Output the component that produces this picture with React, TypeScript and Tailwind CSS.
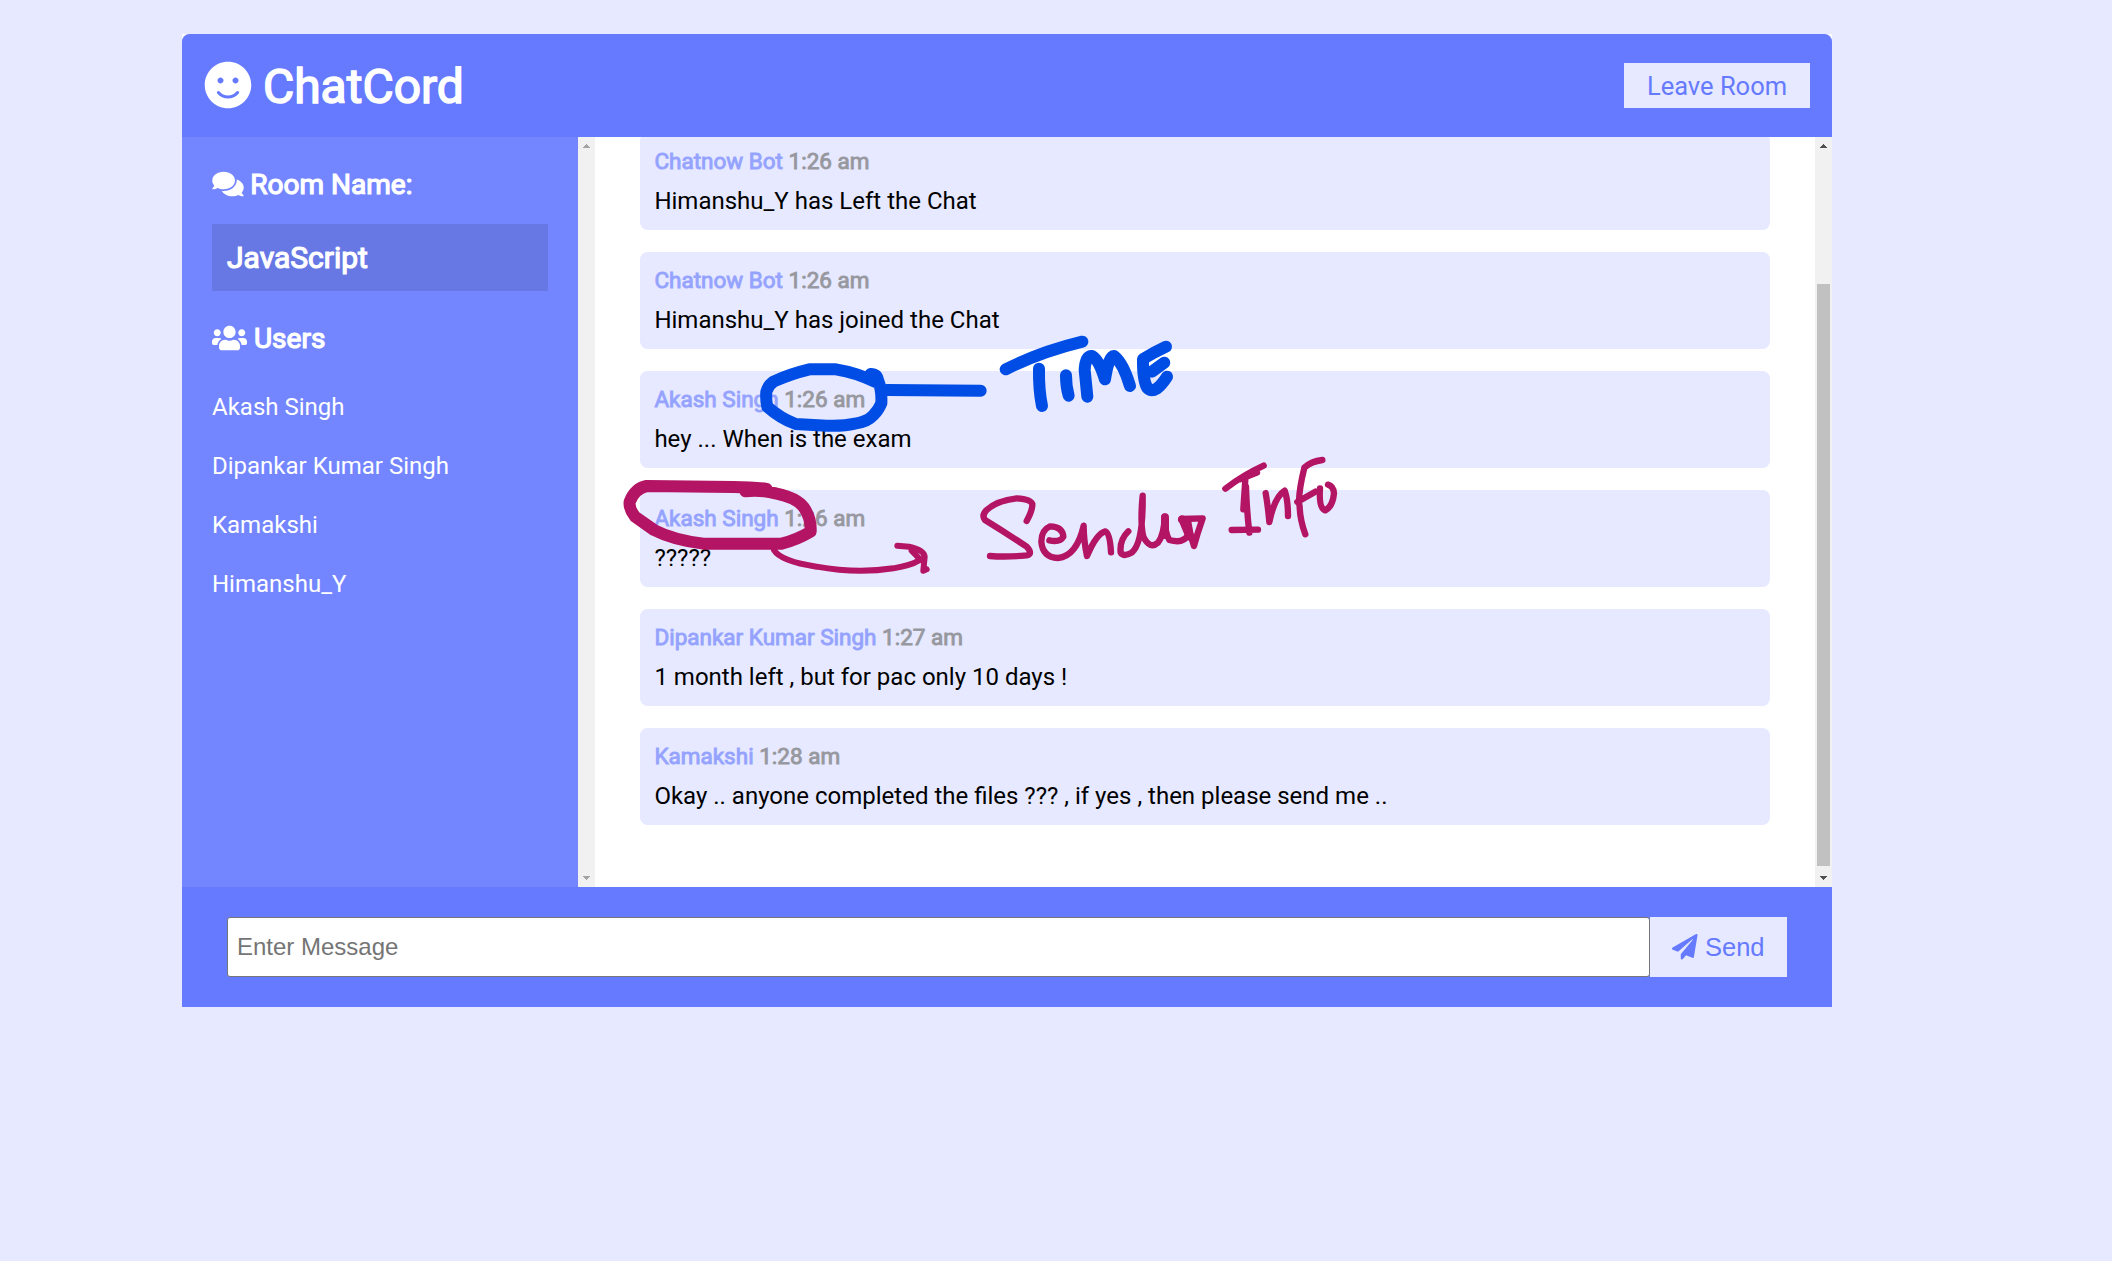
import { FaComments, FaPaperPlane, FaSmile, FaUsers } from "react-icons/fa";

const users = ["Akash Singh", "Dipankar Kumar Singh", "Kamakshi", "Himanshu_Y"];

const messages = [
  { sender: "Chatnow Bot", time: "1:26 am", text: "Himanshu_Y has Left the Chat" },
  { sender: "Chatnow Bot", time: "1:26 am", text: "Himanshu_Y has joined the Chat" },
  { sender: "Akash Singh", time: "1:26 am", text: "hey ... When is the exam" },
  { sender: "Akash Singh", time: "1:26 am", text: "?????" },
  { sender: "Dipankar Kumar Singh", time: "1:27 am", text: "1 month left , but for pac only 10 days !" },
  { sender: "Kamakshi", time: "1:28 am", text: "Okay .. anyone completed the files ??? , if yes , then please send me .." },
];

function Arrow({ down, className }: { down?: boolean; className: string }) {
  return (
    <svg className={className} width="7" height="4" viewBox="0 0 7 4" shapeRendering="crispEdges">
      {down ? (
        <path d="M0 0h7v1H0zM1 1h5v1H1zM2 2h3v1H2zM3 3h1v1H3z" fill="currentColor" />
      ) : (
        <path d="M3 0h1v1H3zM2 1h3v1H2zM1 2h5v1H1zM0 3h7v1H0z" fill="currentColor" />
      )}
    </svg>
  );
}

function Scrollbar({ active }: { active?: boolean }) {
  const color = active ? "text-[#505050]" : "text-[#a3a3a3]";
  return (
    <div className="flex w-[17px] shrink-0 flex-col items-center bg-[#f1f1f1] pt-[7px] pb-[7px]">
      <Arrow className={color} />
      {active && <div className="mt-[136px] h-[582px] w-[13px] bg-[#c1c1c1]" />}
      <Arrow down className={"mt-auto " + color} />
    </div>
  );
}

function Message({ sender, time, text }: { sender: string; time: string; text: string }) {
  return (
    <article className="h-[97px] shrink-0 rounded-[7.5px] bg-[#e6e9ff] py-[15px] pr-[15px] pl-[14.4px]">
      <p className="mb-[13px] text-[22.5px] leading-[26px] text-[#7386ff] opacity-70 [-webkit-text-stroke:0.9px]">
        {sender} <span className="text-[#777777]">{time}</span>
      </p>
      <p className="text-[24px] leading-[28px] text-black">{text}</p>
    </article>
  );
}

/* Freehand pen marks laid over the conversation. */
function Ink() {
  return (
    <svg
      className="pointer-events-none absolute top-0 left-0"
      width="2112"
      height="1261"
      viewBox="0 0 2112 1261"
      fill="none"
      strokeLinecap="round"
      strokeLinejoin="round"
    >
      <g transform="translate(610 340) scale(0.33333)">
        <g stroke="#004de6" strokeWidth="36">
          <path d="M782 102Q800 100 804 120Q816 150 814 190Q806 210 790 226Q772 246 735 251Q700 259 650 257L557 252Q510 234 472 200Q467 180 469 155Q474 136 492 124Q540 102 598 88L678 88Q740 98 796 126" />
          <path d="M830 150L1112 152" />
        </g>
        <g stroke="#b31463">
          <path strokeWidth="36" d="M406 454Q450 448 500 461Q560 473 582 503Q604 535 602 575Q560 600 515 611L280 611Q190 600 132 570L75 530Q56 505 59 485Q75 445 110 438L370 441Q430 441 470 447" />
          <path strokeWidth="18" d="M492 630Q512 664 620 680Q740 702 850 685Q905 675 925 662" />
          <path strokeWidth="18" d="M862 617L897 620Q942 630 944 650L940 692L950 688M905 632L932 660" />
        </g>
      </g>
      <g transform="translate(960 320) scale(0.33333)">
        <g stroke="#004de6" strokeWidth="36">
          <path d="M137 148Q240 96 367 65" />
          <path d="M237 146Q236 210 246 258" />
          <path d="M318 166Q318 200 326 227" />
          <path d="M374 150L382 230M374 150Q376 110 394 108Q414 112 435 178Q446 108 462 108Q490 130 510 198" />
          <path d="M618 80Q580 98 549 117Q548 180 562 204Q574 216 590 206Q605 195 621 170M613 128L576 155" />
        </g>
        <g stroke="#b31463" strokeWidth="19">
          <path d="M200 603Q218 570 217 552Q212 537 170 535Q110 542 80 570Q64 586 75 600Q140 640 200 680Q220 702 200 706Q140 712 90 708" />
          <path d="M268 661Q300 668 310 650Q308 620 270 619Q244 630 244 665Q248 712 294 714Q350 708 371 617Q371 660 381 708Q410 640 436 634Q450 640 453 697" />
          <path d="M505 634Q478 660 482 698Q492 712 515 698Q550 670 548 527Q540 610 550 650Q570 690 594 668Q612 645 614 590Q615 640 628 660Q670 672 684 645" />
          <path strokeWidth="24" d="M615 592L615 645" />
          <path d="M684 645L664 597L728 595Q712 640 702 678L680 606L690 640" />
          <path strokeWidth="24" d="M666 598L682 604L690 650" />
          <path d="M796 506Q850 465 911 437M891 458L840 478M856 478L850 568M858 500Q860 570 868 638M815 630L894 629" />
          <path d="M917 519Q924 560 928 606Q944 530 974 512Q984 540 984 588" />
          <path d="M1087 420Q1054 424 1033 443Q1012 530 1019 560Q1020 600 1036 643M1012 546L1066 515" />
          <path d="M1080 505Q1076 566 1096 571Q1118 560 1122 520Q1120 498 1104 494" />
        </g>
      </g>
    </svg>
  );
}

export default function App() {
  return (
    <div className="relative h-[1261px] w-[2112px] overflow-hidden bg-[#e6e9ff] pt-[34px] font-['Roboto',sans-serif]">
      <div className="ml-[182px] w-[1650px] bg-white">
        <header className="flex h-[103px] items-center justify-between rounded-t-[7.5px] bg-[#667aff] px-[22px] text-white">
          <h1 className="pt-[2px] text-[48px] leading-[58px] [-webkit-text-stroke:1.5px]">
            <FaSmile className="-mr-px inline align-[-6px]" strokeWidth="0" /> ChatCord
          </h1>
          <button className="h-[45px] w-[186px] bg-[#e6e9ff] text-[25.5px] leading-[30px] text-[#667aff]">
            Leave Room
          </button>
        </header>

        <main className="flex h-[750px]">
          <aside className="w-[396px] shrink-0 bg-[#7386ff] px-[30px] pt-[31px] text-white">
            <h3 className="text-[28px] leading-[33px] [-webkit-text-stroke:1.2px]">
              <FaComments className="mr-[-0.6px] inline h-[28px] w-[32px] align-[-3.5px]" strokeWidth="0" /> Room Name:
            </h3>
            <h2 className="mt-[23px] bg-black/10 p-[15px] text-[30px] leading-[37px] [-webkit-text-stroke:1.2px]">
              JavaScript
            </h2>
            <h3 className="mt-[31px] text-[28px] leading-[33px] [-webkit-text-stroke:1.2px]">
              <FaUsers className="inline h-[28px] w-[35px] align-[-3.5px]" strokeWidth="0" /> Users
            </h3>
            <ul className="mt-[23px] text-[24px] leading-[29px]">
              {users.map((user) => (
                <li key={user} className="py-[15px]">
                  {user}
                </li>
              ))}
            </ul>
          </aside>
          <Scrollbar />
          <section className="flex flex-1 flex-col justify-end gap-[22px] overflow-hidden px-[45px] pb-[62px]">
            {messages.map((message, index) => (
              <Message key={index} {...message} />
            ))}
          </section>
          <Scrollbar active />
        </main>

        <footer className="flex h-[120px] items-center bg-[#667aff] pr-[45px] pl-[45px] font-['Liberation_Sans',sans-serif]">
          <input
            className="h-[60px] flex-1 rounded-[3px] border border-[#767676] bg-white px-[9px] text-[24px] placeholder:text-[#757575]"
            placeholder="Enter Message"
          />
          <button className="flex h-[60px] w-[137px] items-center justify-center gap-[7px] bg-[#e6e9ff] text-[25.5px] text-[#667aff]">
            <FaPaperPlane /> Send
          </button>
        </footer>
      </div>
      <Ink />
    </div>
  );
}
